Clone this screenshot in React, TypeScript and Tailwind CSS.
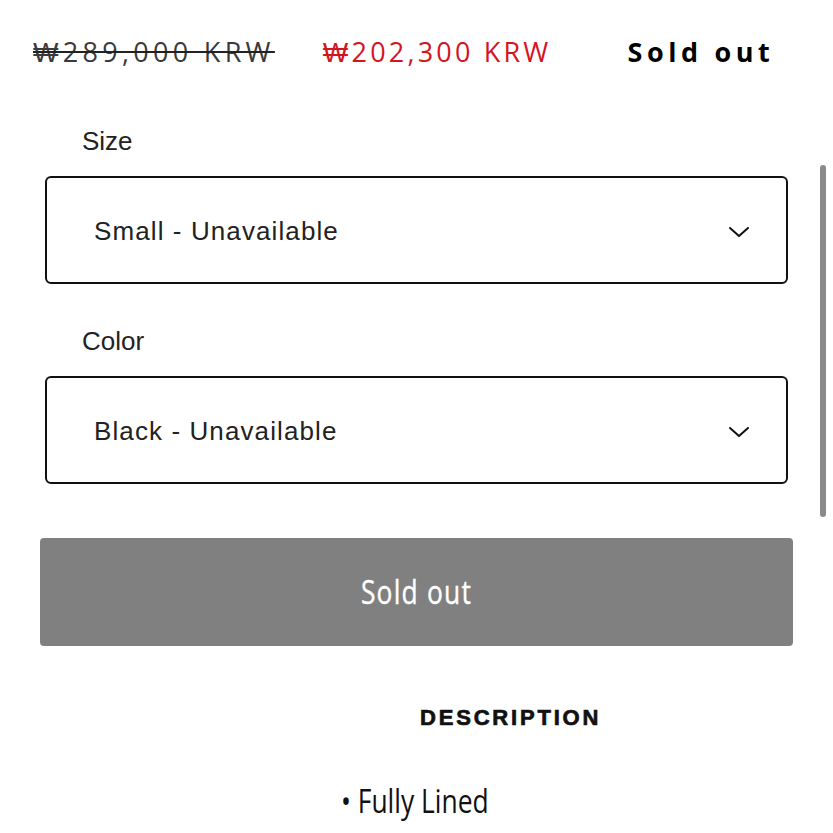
import React from "react";

function Chevron() {
  return (
    <svg width="22" height="14" viewBox="0 0 22 14" fill="none">
      <path d="M2 3 L11 11 L20 3" stroke="#111" strokeWidth="2" strokeLinecap="round" strokeLinejoin="round" />
    </svg>
  );
}

function SelectBox({ label, value }: { label: string; value: string }) {
  return (
    <div className="flex flex-col">
      <div className="pl-[82px] h-[46px] flex items-end pb-[9px] text-[26px] text-[#222] font-['Liberation_Sans',sans-serif]">
        {label}
      </div>
      <div className="ml-[45px] w-[743px] h-[108px] mt-[6px] border-2 border-[#111] rounded-[6px] flex items-center justify-between pl-[47px] pr-[36px] pt-[3px]">
        <span className="text-[26px] tracking-[1.1px] text-[#222] font-['Liberation_Sans',sans-serif]">{value}</span>
        <Chevron />
      </div>
    </div>
  );
}

export default function App() {
  return (
    <div className="relative w-[833px] h-[833px] bg-white overflow-hidden">
      {/* price row */}
      <div className="flex items-center h-[106px] pb-[2px] font-['Open_Sans',sans-serif] text-[27px]">
        <span className="ml-[33px] text-[#3a3a3a] tracking-[4.3px] line-through decoration-[2px] decoration-[#222]">
          ₩289,000 KRW
        </span>
        <span className="ml-[48px] text-[#d3151f] tracking-[3.2px]">₩202,300 KRW</span>
        <span className="ml-[76px] text-black font-bold tracking-[4.6px]">Sold out</span>
      </div>

      <div className="flex flex-col mt-[18px]">
        <SelectBox label="Size" value="Small - Unavailable" />
        <div className="h-[40px]" />
        <SelectBox label="Color" value="Black - Unavailable" />
      </div>

      <div className="mt-[54px] ml-[40px] w-[753px] h-[108px] bg-[#808080] rounded-[4px] flex items-center justify-center">
        <span className="text-white text-[33px] tracking-[1.5px] scale-x-[0.8] font-['Open_Sans',sans-serif] [-webkit-text-stroke:0.4px_#fff]">Sold out</span>
      </div>

      <div className="mt-[57px] pl-[420px] text-[22px] leading-[30px] font-black tracking-[2.8px] text-[#111] [-webkit-text-stroke:0.7px_#111] font-['Liberation_Sans',sans-serif]">
        DESCRIPTION
      </div>

      <div className="mt-[43px] pl-[341px] text-[33px] text-[#111] font-['Open_Sans',sans-serif]">
        <span className="inline-block origin-left scale-x-[0.8]">• Fully Lined</span>
      </div>

      {/* scrollbar overlay */}
      <div className="absolute left-[820px] top-[165px] w-[6px] h-[352px] rounded-full bg-[#8a8a8a]" />
    </div>
  );
}
